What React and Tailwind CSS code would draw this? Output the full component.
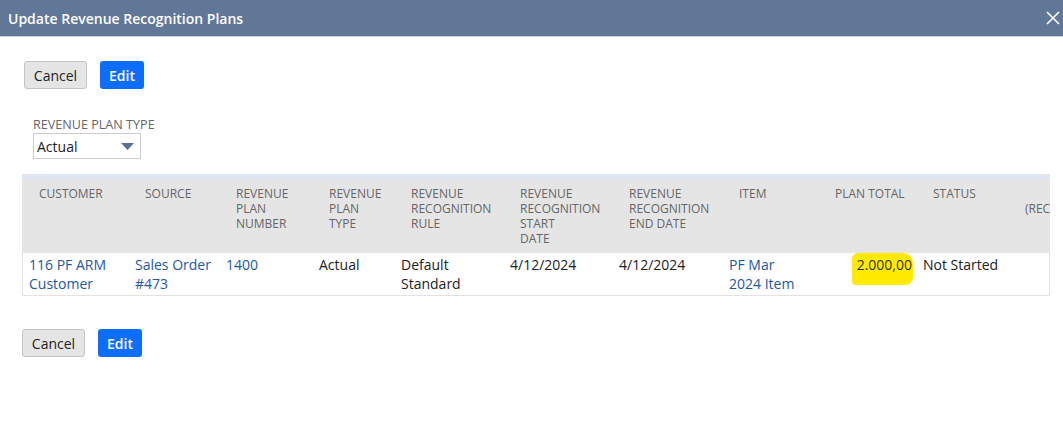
import React from 'react';

const columns = [
  { w: 106, head: ['CUSTOMER'], cell: ['116 PF ARM', 'Customer'], link: true },
  { w: 91, head: ['SOURCE'], cell: ['Sales Order', '#473'], link: true },
  { w: 93, head: ['REVENUE', 'PLAN', 'NUMBER'], cell: ['1400'], link: true },
  { w: 82, head: ['REVENUE', 'PLAN', 'TYPE'], cell: ['Actual'] },
  { w: 109, head: ['REVENUE', 'RECOGNITION', 'RULE'], cell: ['Default', 'Standard'] },
  { w: 109, head: ['REVENUE', 'RECOGNITION', 'START', 'DATE'], cell: ['4/12/2024'] },
  { w: 110, head: ['REVENUE', 'RECOGNITION', 'END DATE'], cell: ['4/12/2024'] },
  { w: 96, head: ['ITEM'], cell: ['PF Mar', '2024 Item'], link: true },
  { w: 98, head: ['PLAN TOTAL'], cell: ['2.000,00'], total: true },
  { w: 92, head: ['STATUS'], cell: ['Not Started'] },
  { w: 42, head: ['', '(REC'], cell: [''] },
];

const Buttons = ({ className }) => (
  <div className={`flex gap-[13px] ${className}`}>
    <button className="h-[28px] w-[63px] rounded-[3px] border border-[#c4c4c4] bg-[#e5e5e5] text-[14px] text-[#222]">
      Cancel
    </button>
    <button className="h-[28px] w-[44px] rounded-[3px] bg-[#0d6efd] text-[14px] font-semibold text-white">
      Edit
    </button>
  </div>
);

const App = () => {
  return (
    <div className="h-[436px] w-[1063px] overflow-hidden bg-white font-['Open_Sans',sans-serif]">

      {/* title bar */}
      <div className="flex h-[37px] items-center justify-between border-b border-[#c8d2de] bg-[#617798] pl-[8px] pr-[3px]">
        <span className="text-[14px] font-semibold text-white">Update Revenue Recognition Plans</span>
        <svg width="14" height="14" viewBox="0 0 14 14" className="mb-[1px]">
          <path d="M1 1 L13 13 M13 1 L1 13" stroke="white" strokeWidth="1.6" />
        </svg>
      </div>

      <Buttons className="ml-[24px] mt-[24px]" />

      {/* plan type */}
      <div className="ml-[33px] mt-[28px]">
        <div className="text-[12.6px] leading-[16px] text-[#666]">REVENUE PLAN TYPE</div>
        <div className="mt-0 flex h-[26px] w-[108px] items-center justify-between border border-[#cccccc] pl-[3px] pr-[6px]">
          <span className="text-[14px] text-[#222]">Actual</span>
          <svg width="13" height="7" viewBox="0 0 13 7">
            <path d="M0 0 H13 L6.5 7 Z" fill="#5b7191" />
          </svg>
        </div>
      </div>

      {/* table */}
      <div className="ml-[22px] mt-[15px] w-[1028px] overflow-hidden">
        <div className="h-[5px] bg-[#dfe6ef]" />
        <div className="flex h-[74px] bg-[#e5e5e5]">
          {columns.map((c, i) => (
            <div
              key={i}
              style={{ width: c.w }}
              className="shrink-0 whitespace-nowrap pl-[17px] pt-[7px] text-[12px] leading-[15px] text-[#666]"
            >
              {c.head.map((h, j) => (
                <div key={j} className="h-[15px]">{h}</div>
              ))}
            </div>
          ))}
        </div>
        <div className="flex h-[43px] border-b border-l border-r border-[#e2e2e2] bg-white">
          {columns.map((c, i) => (
            <div
              key={i}
              style={{ width: c.w }}
              className={`shrink-0 whitespace-nowrap pt-[2px] text-[14px] leading-[19px] ${c.total ? 'pr-[4px] text-right' : 'pl-[7px]'} ${c.link ? 'text-[#24589e]' : 'text-[#222]'} ${i === 0 ? '-ml-px' : ''}`}
            >
              {c.total ? (
                <span className="relative inline-block">
                  <span className="absolute -bottom-[11px] -left-[5px] -right-[1px] -top-[2px] rounded-[6px_10px_8px_4px] bg-[#ffea00]" />
                  <span className="relative text-[#333]">{c.cell[0]}</span>
                </span>
              ) : (
                c.cell.map((t, j) => <div key={j}>{t}</div>)
              )}
            </div>
          ))}
        </div>
      </div>

      <Buttons className="ml-[22px] mt-[33px]" />
    </div>
  );
};

export default App;
